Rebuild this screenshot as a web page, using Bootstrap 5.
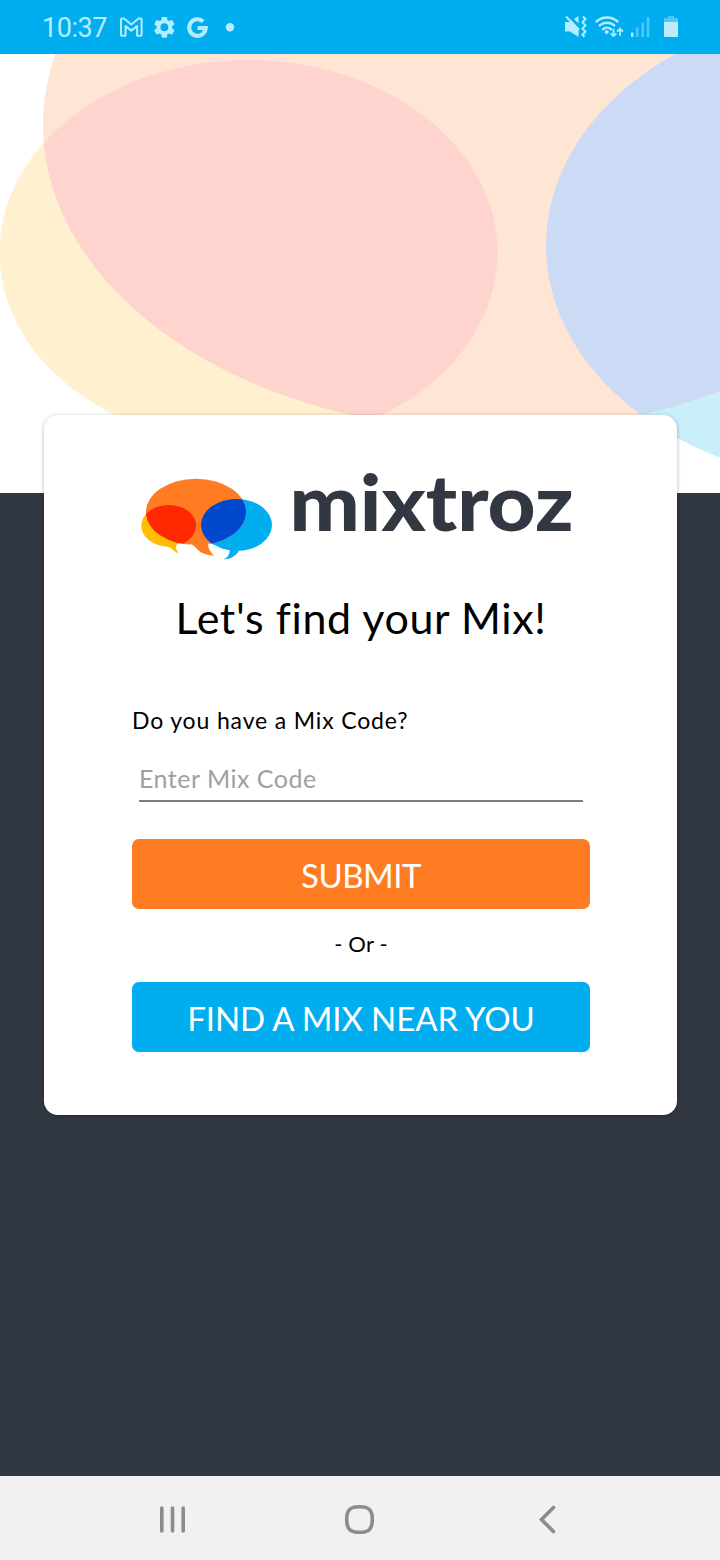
<!DOCTYPE html>
<html lang="en">
<head>
<meta charset="utf-8">
<meta name="viewport" content="width=device-width, initial-scale=1">
<title>Mixtroz</title>
<link href="https://cdn.jsdelivr.net/npm/bootstrap@5.3.0/dist/css/bootstrap.min.css" rel="stylesheet">
<style>
  body { font-family: Lato, "Open Sans", sans-serif; background: #323842; color: #000; height: 1560px; overflow: hidden; }
  svg { display: block; flex: none; }
  .status-bar { height: 54px; background: #00adef; color: #b5ecff; padding: 0 41px 0 42px; font-family: Roboto, sans-serif; }
  .clock { font-size: 27px; line-height: 52px; padding-top: 2px; letter-spacing: -.45px; width: 77px; }
  .hero { height: 439px; background: #fff; }
  .login { width: 633px; height: 700px; margin: -78px 0 0 44px; padding: 25px 87px 0 88px; border-radius: 14px; background: #fff; box-shadow: 0 1px 4px rgba(0,0,0,.28); position: relative; }
  .headline { font-size: 43px; line-height: 52px; margin: 27px 0 0; font-weight: 400; white-space: nowrap; letter-spacing: .62px; }
  .code-label { font-size: 23px; line-height: 28px; margin-top: 62px; letter-spacing: .85px; }
  .code-input { width: 444px; height: 44px; margin: 24px 0 0 7px; padding: 0 0 2px; border: 0; border-bottom: 2px solid #7d7d7d; border-radius: 0; font-size: 25px; line-height: 40px; letter-spacing: .5px; background: none; }
  .code-input::placeholder { color: #a0a0a0; opacity: 1; }
  .action { height: 70px; border: 0; border-radius: 7px; color: #fff; font-size: 33px; line-height: 40px; padding: 1px 0 0; white-space: nowrap; letter-spacing: -.1px; }
  .action-submit { background: #ff7c22; margin-top: 37px; letter-spacing: -.5px; }
  .action-find { background: #00adef; }
  .either { font-size: 22px; line-height: 28px; margin: 21px 0 24px; letter-spacing: .2px; }
  .system-nav { height: 84px; background: #f1f1f1; }
</style>
</head>
<body class="d-flex flex-column">
<header class="status-bar d-flex align-items-center justify-content-between">
  <div class="d-flex align-items-center">
    <span class="clock">10:37</span>
    <svg width="118" height="54" viewBox="119 0 118 54">
      <path d="M121 35V19.500q0-1 1-1h2l7.300 6 7.300-6h2q1 0 1 1V35q0 .8-1 .8h-3.500V26l-5.800 4.600-5.800-4.600v9.800H122q-1 0-1-.8z" fill="none" stroke="#b5ecff" stroke-width="2" stroke-linejoin="round"/>
      <g fill="#b5ecff" transform="translate(151.400 14.300) scale(1.080)">
        <path d="M19.140 12.940c.04-.3.060-.61.060-.94 0-.32-.02-.64-.07-.94l2.030-1.580c.18-.14.23-.41.120-.61l-1.920-3.320c-.12-.22-.37-.29-.59-.22l-2.390.96c-.5-.38-1.030-.7-1.620-.94l-.36-2.540c-.04-.24-.24-.41-.48-.41h-3.840c-.24 0-.43.170-.47.410l-.36 2.540c-.59.240-1.130.570-1.620.940l-2.390-.96c-.22-.08-.47 0-.59.220L2.740 8.870c-.12.210-.08.470.120.610l2.030 1.580c-.05.300-.09.630-.09.940s.02.640.070.940l-2.030 1.580c-.18.140-.23.410-.12.610l1.920 3.320c.12.220.37.290.59.220l2.390-.96c.5.380 1.030.7 1.620.94l.36 2.540c.05.240.24.410.48.410h3.840c.24 0 .44-.17.470-.41l.36-2.540c.59-.24 1.130-.56 1.620-.94l2.390.96c.22.080.47 0 .59-.22l1.920-3.320c.12-.22.070-.47-.12-.61l-2.010-1.580zM12 15.600a3.600 3.600 0 1 1 0-7.200 3.600 3.600 0 0 1 0 7.200z"/>
      </g>
      <path d="M203.200 21.500a8.300 8.300 0 1 0 2.600 6.400H197.500" fill="none" stroke="#b5ecff" stroke-width="4"/>
      <circle cx="230" cy="27.300" r="4.200" fill="#b5ecff"/>
    </svg>
  </div>
  <svg width="116" height="54" viewBox="563 0 116 54">
    <g fill="#b5ecff">
      <path d="M565 22h4l2.500-1.500L578.500 28v9L570 31.500h-5z"/>
      <path d="M574 19l4.500-3v7.500z"/>
      <path d="M566 16.500L579 30" stroke="#b5ecff" stroke-width="2"/>
      <path d="M583 16.500l2.500 2.500-3 3.200 3 3.200-3 3.200 3 3.200-3 3 2 2" fill="none" stroke="#b5ecff" stroke-width="2"/>
    </g>
    <g fill="none" stroke="#b5ecff" stroke-width="2.400" stroke-linecap="round">
      <path d="M596.500 21.500a16 16 0 0 1 21 0M599.800 25.400a11 11 0 0 1 14.400 0M603 29.200a6.300 6.300 0 0 1 8 0"/>
      <path d="M613.500 29.500v6.500M611.200 33.800l2.300 2.300 2.300-2.300M620 35V28.500M617.700 31l2.300-2.300 2.300 2.300" stroke-width="1.800"/>
    </g>
    <circle cx="606.700" cy="32" r="2" fill="#b5ecff"/>
    <path d="M631 32.500h2.500V37H631z" fill="#b5ecff"/>
    <path d="M636 27.500h2.500V37H636zM641.500 22.500h2.500V37h-2.500zM646.800 17h2.500v20h-2.500z" fill="#51c7f5"/>
    <path d="M664 22v-3q0-1 1-1h3v-2h6v2h3q1 0 1 1v3z" fill="#51c7f5"/>
    <path d="M664 22h14v14q0 1-1 1h-12q-1 0-1-1z" fill="#bdeafc"/>
  </svg>
</header>

<section class="hero">
  <svg width="720" height="439" viewBox="0 54 720 439">
    <defs><clipPath id="heroBubble"><ellipse cx="496" cy="125" rx="453" ry="306"/></clipPath></defs>
    <ellipse cx="248.500" cy="252.500" rx="249" ry="192.500" fill="#fff1cf"/>
    <ellipse cx="868" cy="245.500" rx="322" ry="239" fill="#c9effb"/>
    <g clip-path="url(#heroBubble)">
      <path d="M0 54h720v400H0z" fill="#ffe5d4"/>
      <ellipse cx="248.500" cy="252.500" rx="249" ry="192.500" fill="#ffd3ce"/>
      <ellipse cx="868" cy="245.500" rx="322" ry="239" fill="#cbdbf5"/>
    </g>
  </svg>
</section>

<main class="flex-grow-1">
  <form class="login d-flex flex-column">
    <svg width="458" height="125" viewBox="132 440 458 125" role="img" aria-label="mixtroz">
      <defs><clipPath id="logoBubble"><ellipse cx="196" cy="512" rx="50" ry="33.300"/></clipPath></defs>
      <ellipse cx="168.700" cy="525.700" rx="27.400" ry="20.800" fill="#ffbc00"/>
      <path d="M163 545.500q6 1 9 3.500 3 3 6.700 4.700-3-4-2.500-8l.5-4z" fill="#ffbc00"/>
      <ellipse cx="236.500" cy="525" rx="35.500" ry="26" fill="#00adef"/>
      <ellipse cx="196" cy="512" rx="50" ry="33.300" fill="#ff7c22"/>
      <path d="M190 543.500q4 1.500 7.500 6 5 5.500 16.500 6.300-5.500-4.500-5.700-12.800z" fill="#ff7c22"/>
      <g clip-path="url(#logoBubble)">
        <ellipse cx="168.700" cy="525.700" rx="27.400" ry="20.800" fill="#ff2800"/>
        <ellipse cx="236.500" cy="525" rx="35.500" ry="26" fill="#0048cd"/>
      </g>
      <path d="M176.200 549v-3q.2-2.500 4.500-2.500 5 1.500 12 .8L190 547l-10 3z" fill="#fff"/>
      <path d="M208.300 543.500q5 .5 9 2.800 5.500 3.500 12.500 4l-1 3h-15l-4.200-3q-1.500-3-1.300-6.800z" fill="#fff"/>
      <path d="M229.800 549.500q.2 7-6.500 10 11-.5 16-9z" fill="#00adef"/>
      <text x="289.500" y="531" font-family="Lato, sans-serif" font-size="79" font-weight="900" fill="#323842" textLength="284" lengthAdjust="spacingAndGlyphs">mixtroz</text>
    </svg>
    <h1 class="headline text-center">Let's find your Mix!</h1>
    <label class="code-label" for="code">Do you have a Mix Code?</label>
    <input class="code-input" id="code" type="text" placeholder="Enter Mix Code">
    <button class="btn action action-submit" type="button">SUBMIT</button>
    <div class="either text-center">- Or -</div>
    <button class="btn action action-find" type="button">FIND A MIX NEAR YOU</button>
  </form>
</main>

<nav class="system-nav">
  <svg width="720" height="84" viewBox="0 1476 720 84" fill="none" stroke="#8c8c8c" stroke-width="3.600" stroke-linecap="round">
    <path d="M161.800 1508v23M172.500 1508v23M183.200 1508v23"/>
    <path d="M359.500 1506.700c9.500 0 12.800 3.300 12.800 12.800s-3.300 12.800-12.800 12.800-12.800-3.300-12.800-12.800 3.300-12.800 12.800-12.800z"/>
    <path d="M553.500 1507.500l-12 12 12 12"/>
  </svg>
</nav>
<script src="https://cdn.jsdelivr.net/npm/bootstrap@5.3.0/dist/js/bootstrap.bundle.min.js"></script>
</body>
</html>
